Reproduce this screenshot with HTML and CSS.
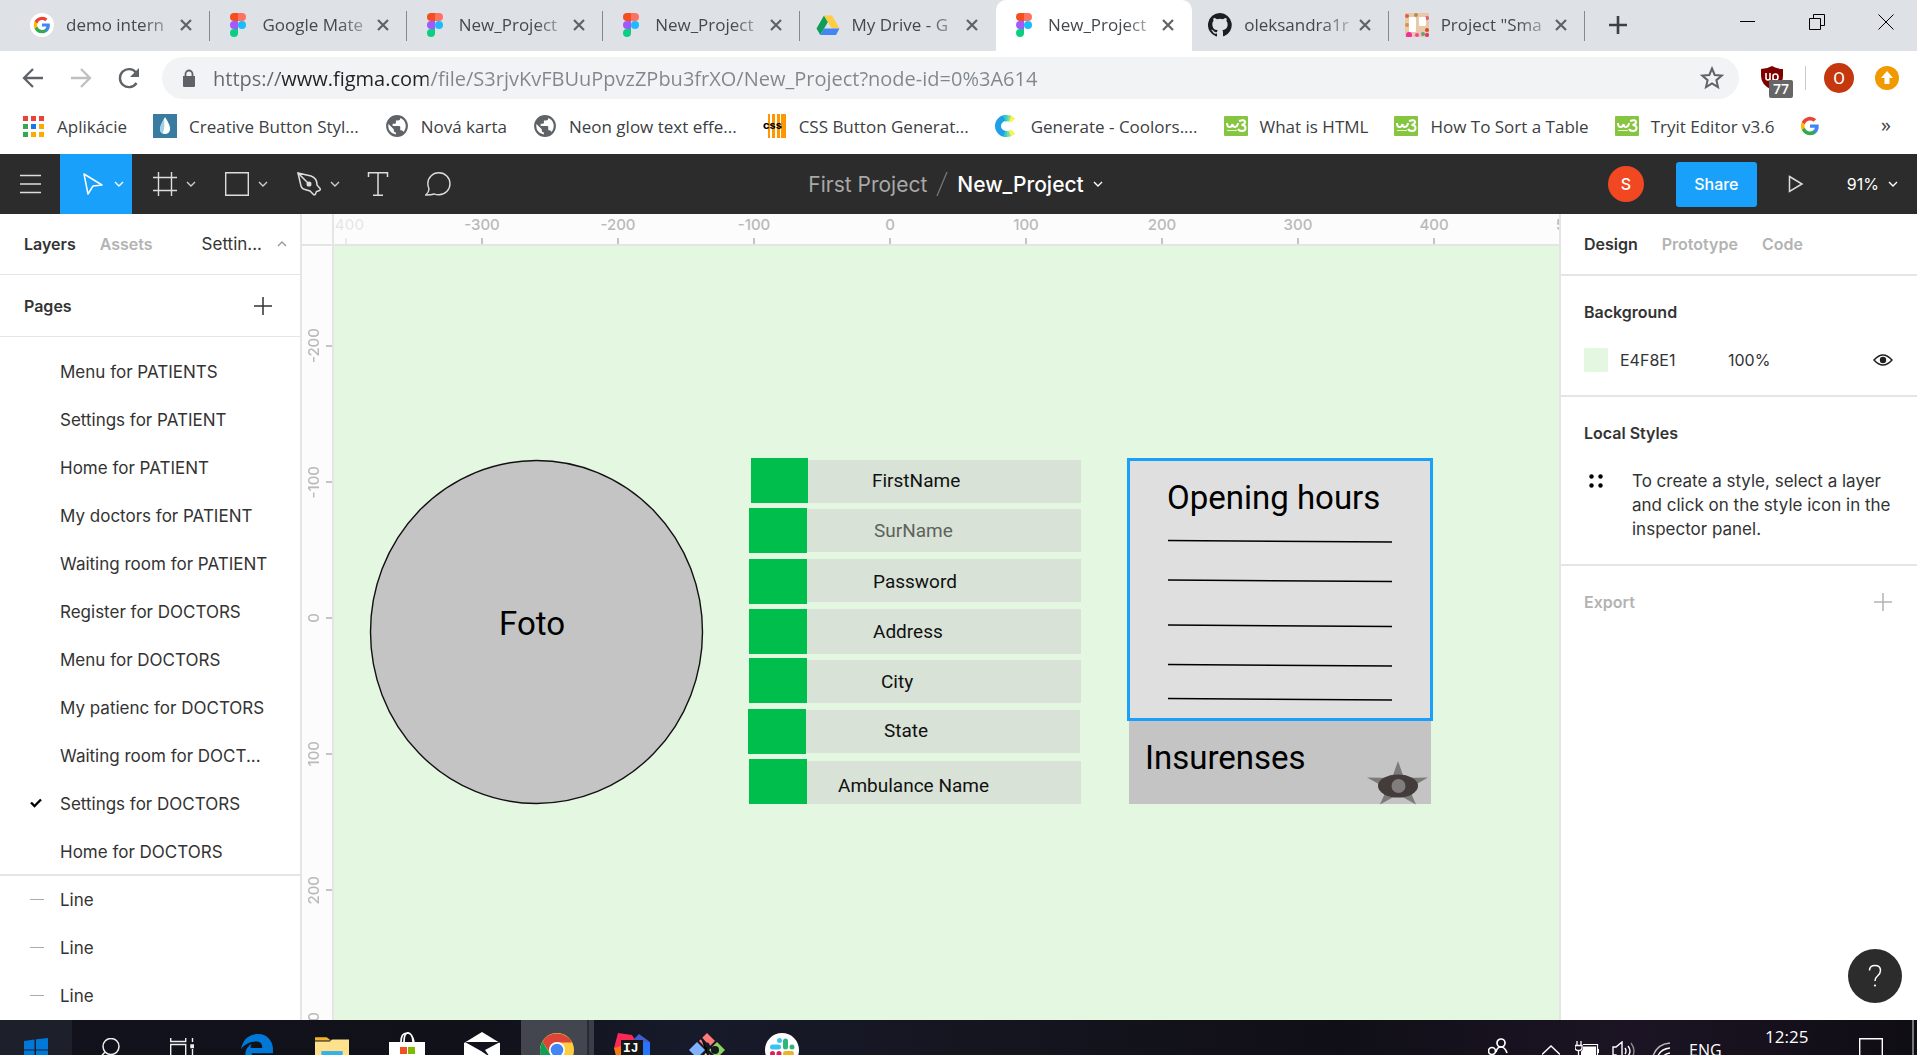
FILE: index.html
```html
<!DOCTYPE html>
<html lang="en">
<head>
<meta charset="utf-8">
<title>New_Project</title>
<link rel="stylesheet" href="styles.css">
</head>
<body>
<svg class="defs" aria-hidden="true">
  <symbol id="figma" viewBox="0 0 16 24"><path fill="#f24e1e" d="M4 0h4v8H4a4 4 0 0 1 0-8z"/><path fill="#ff7262" d="M8 0h4a4 4 0 0 1 0 8H8z"/><path fill="#a259ff" d="M4 8h4v8H4a4 4 0 0 1 0-8z"/><circle cx="12" cy="12" r="4" fill="#1abcfe"/><path fill="#0acf83" d="M4 16h4v4a4 4 0 1 1-4-4z"/></symbol>
  <symbol id="google" viewBox="0 0 24 24"><path fill="#4285f4" d="M22.5 12.2c0-.8-.1-1.400-.2-2.100H12v4h5.900a5 5 0 0 1-2.200 3.400v2.800h3.600c2.100-2 3.200-4.800 3.200-8.100z"/><path fill="#34a853" d="M12 23c3 0 5.500-1 7.300-2.700l-3.600-2.800c-1 .7-2.200 1.100-3.700 1.100-2.900 0-5.300-1.900-6.200-4.500H2.200v2.800A11 11 0 0 0 12 23z"/><path fill="#fbbc05" d="M5.800 14.100a6.600 6.600 0 0 1 0-4.200V7.100H2.200a11 11 0 0 0 0 9.800z"/><path fill="#ea4335" d="M12 5.400c1.600 0 3.100.6 4.200 1.600l3.200-3.200A11 11 0 0 0 2.200 7.100l3.600 2.800C6.700 7.300 9.100 5.400 12 5.400z"/></symbol>
  <symbol id="close" viewBox="0 0 14 14"><path d="M2 2l10 10M12 2L2 12" stroke="#5f6368" stroke-width="2.200" fill="none"/></symbol>
  <symbol id="chev" viewBox="0 0 10 8"><path d="M1 2l4 4 4-4" stroke="currentColor" stroke-width="1.400" fill="none"/></symbol>
  <symbol id="globe" viewBox="1 1 22 22"><path fill="#5f6368" d="M12 2a10 10 0 1 0 0 20 10 10 0 0 0 0-20zm-1 17.900A8 8 0 0 1 4.200 10.200L9 15v1a2 2 0 0 0 2 2v1.900zm6.900-2.500A2 2 0 0 0 16 16h-1v-3a1 1 0 0 0-1-1H8v-2h2a1 1 0 0 0 1-1V7h2a2 2 0 0 0 2-2v-.4a8 8 0 0 1 2.900 12.800z"/></symbol>
  <symbol id="w3" viewBox="0 0 24 20"><rect width="24" height="20" rx="1" fill="#86c540"/><path d="M3 7q0 4 2.500 4T8.500 8q0 3 2.500 3t3-4M15 5q6-2 6 1 0 2.500-3.500 3 4 0 4 3t-3.500 3q-3 0-4-2" stroke="#fff" stroke-width="2" fill="none"/><path d="M3 14.500h10" stroke="#eaf6dc"/></symbol>
  <symbol id="plus" viewBox="0 0 18 18"><path d="M9 0v18M0 9h18" stroke="currentColor" stroke-width="1.500"/></symbol>
</svg>

<header class="browser">
  <div class="tabstrip">
    <div class="tabs">
      <div class="tab"><svg class="fav" viewBox="0 0 24 24"><circle cx="12" cy="12" r="12" fill="#fff"/><use href="#google" x="3" y="3" width="18" height="18"/></svg><span class="tab-title">demo intern</span><button class="x" aria-label="Close tab"><svg><use href="#close"/></svg></button></div>
      <div class="tab"><svg class="fav"><use href="#figma"/></svg><span class="tab-title">Google Mate</span><button class="x" aria-label="Close tab"><svg><use href="#close"/></svg></button></div>
      <div class="tab"><svg class="fav"><use href="#figma"/></svg><span class="tab-title">New_Project</span><button class="x" aria-label="Close tab"><svg><use href="#close"/></svg></button></div>
      <div class="tab"><svg class="fav"><use href="#figma"/></svg><span class="tab-title">New_Project</span><button class="x" aria-label="Close tab"><svg><use href="#close"/></svg></button></div>
      <div class="tab before"><svg class="fav" viewBox="0 0 24 24"><path fill="#0f9d58" d="M8 2.500L.5 15.500 4.300 22l7.600-13z"/><path fill="#ffcd40" d="M8 2.500h8l7.500 13H16z"/><path fill="#4285f4" d="M8 15.500h15.500L20 22H4.300z"/></svg><span class="tab-title">My Drive - G</span><button class="x" aria-label="Close tab"><svg><use href="#close"/></svg></button></div>
      <div class="tab active"><svg class="fav"><use href="#figma"/></svg><span class="tab-title">New_Project</span><button class="x" aria-label="Close tab"><svg><use href="#close"/></svg></button></div>
      <div class="tab"><svg class="fav" viewBox="0 0 16 16"><path fill="#1b1f23" d="M8 0a8 8 0 0 0-2.500 15.600c.4.100.5-.2.500-.4v-1.500c-2 .4-2.500-.5-2.700-1-.1-.2-.5-.9-.8-1.100-.3-.1-.7-.5 0-.5.600 0 1.100.6 1.200.8.700 1.200 1.900.9 2.300.7.100-.5.300-.9.500-1.100-1.800-.2-3.600-.9-3.600-4 0-.9.300-1.600.8-2.100-.1-.2-.4-1 .1-2.100 0 0 .7-.2 2.200.8a7.500 7.500 0 0 1 4 0c1.500-1 2.200-.8 2.200-.8.400 1.100.2 1.900.1 2.100.5.600.8 1.300.8 2.100 0 3.100-1.900 3.700-3.600 3.900.3.300.5.700.5 1.500v2.200c0 .2.200.5.600.4A8 8 0 0 0 8 0z"/></svg><span class="tab-title">oleksandra1r</span><button class="x" aria-label="Close tab"><svg><use href="#close"/></svg></button></div>
      <div class="tab"><svg class="fav" viewBox="0 0 24 24"><rect width="24" height="24" fill="#e8c9a8"/><g><circle cx="2" cy="3" r="2" fill="#e0603a"/><circle cx="22" cy="5" r="2" fill="#e05a7a"/><circle cx="2" cy="12" r="2" fill="#d8924a"/><circle cx="4" cy="22" r="3" fill="#f02f9a"/><circle cx="12" cy="22" r="2" fill="#ff3ca8"/><circle cx="18" cy="21" r="2" fill="#6b9a8a"/><circle cx="22" cy="17" r="2" fill="#cc4f30"/><circle cx="11" cy="2" r="2" fill="#b98a4a"/><circle cx="22" cy="22" r="2" fill="#e03070"/></g><rect x="4" y="4" width="7" height="15" rx="1" fill="#fff"/><rect x="14" y="4" width="7" height="9" rx="1" fill="#fff"/></svg><span class="tab-title">Project "Sma</span><button class="x" aria-label="Close tab"><svg><use href="#close"/></svg></button></div>
    </div>
    <button class="newtab" aria-label="New tab"><svg viewBox="0 0 18 18"><path d="M9 0v18M0 9h18" stroke="#3c4043" stroke-width="2.600"/></svg></button>
    <div class="winctl">
      <button aria-label="Minimize"><svg viewBox="0 0 16 16"><path d="M0 7.500h15" stroke="#000"/></svg></button>
      <button aria-label="Restore"><svg viewBox="0 0 16 16"><path d="M.5 4.500h11v11H.5zM4.500 4V.5h11v11H12" stroke="#000" fill="none"/></svg></button>
      <button aria-label="Close"><svg viewBox="0 0 16 16"><path d="M.5.5l15 15M15.500.5l-15 15" stroke="#000"/></svg></button>
    </div>
  </div>

  <div class="navbar">
    <button class="nav" aria-label="Back"><svg viewBox="0 0 24 24"><path d="M22 12H3M12 3l-9 9 9 9" stroke="#5f6368" stroke-width="2.300" fill="none"/></svg></button>
    <button class="nav" aria-label="Forward"><svg viewBox="0 0 24 24"><path d="M2 12h19M12 3l9 9-9 9" stroke="#bdbfc1" stroke-width="2.300" fill="none"/></svg></button>
    <button class="nav" aria-label="Reload"><svg viewBox="0 0 24 24"><path d="M19.500 17A9 9 0 1 1 19 6.500" stroke="#5f6368" stroke-width="2.400" fill="none"/><path d="M22 2v9h-9z" fill="#5f6368"/></svg></button>
    <label class="omnibox">
      <svg class="lock" viewBox="0 0 14 18"><path fill="#5f6368" d="M1 7h12v10q0 1-1 1H2q-1 0-1-1z"/><path d="M3.500 8V5a3.500 3.500 0 0 1 7 0v3" stroke="#5f6368" stroke-width="1.800" fill="none"/></svg>
      <input type="text" aria-label="Address" value="https://www.figma.com/file/S3rjvKvFBUuPpvzZPbu3frXO/New_Project?node-id=0%3A614">
      <svg class="star" viewBox="0 0 24 24"><path d="M12 2.500l2.700 6.500 7 .6-5.300 4.600 1.600 6.900-6-3.700-6 3.700 1.600-6.900L2.300 9.600l7-.6z" stroke="#5f6368" stroke-width="2" fill="none"/></svg>
    </label>
    <button class="ublock" aria-label="Blocked requests"><svg viewBox="0 0 22 24"><path fill="#800000" d="M11 0q5 3 11 3v7q0 9-11 14Q0 19 0 10V3q6 0 11-3z"/><path d="M5 7v5q0 2 2 2t2-2V7v7M12 18v-8q0-2 2.500-2t2.500 3-2.500 3-2.500-2" stroke="#fff" stroke-width="1.600" fill="none"/></svg><span class="badge">77</span></button>
    <span class="vsep"></span>
    <button class="avatar" aria-label="Profile">O</button>
    <button class="update" aria-label="Update"><svg viewBox="0 0 24 24"><circle cx="12" cy="12" r="12" fill="#f29900"/><path fill="#fff" d="M12 5l6 7h-3.500v6h-5v-6H6z"/></svg></button>
  </div>

  <nav class="bookmarks">
    <a href="#" class="bm"><svg viewBox="0 0 24 24"><path fill="#ea4335" d="M2 2h5v5H2zM10 2h5v5h-5zM18 2h5v5h-5z"/><path fill="#34a853" d="M2 10h5v5H2zM2 18h5v5H2z"/><path fill="#1a73e8" d="M10 10h5v5h-5z"/><path fill="#f9ab00" d="M18 10h5v5h-5zM10 18h5v5h-5zM18 18h5v5h-5z"/></svg>Aplikácie</a>
    <a href="#" class="bm"><svg viewBox="0 0 24 24"><rect width="24" height="24" fill="#3a7ca0"/><path fill="#fff" d="M12 3q6 9 5 13-1 4-5 4-4 0-5-4 0-4 5-13z"/><path fill="#9fd0e6" d="M11 5q1 8-1 14-3-1-3-4 0-4 4-10z"/></svg>Creative Button Styl...</a>
    <a href="#" class="bm"><svg><use href="#globe"/></svg>Nová karta</a>
    <a href="#" class="bm"><svg><use href="#globe"/></svg>Neon glow text effe...</a>
    <a href="#" class="bm"><svg viewBox="0 0 24 24"><path fill="#ff9800" d="M5 0h2v24H5zM9 0h3v24H9zM14 0h3v24h-3zM18 0h5v24h-5z"/><text x="0" y="15" font-size="11" font-weight="700" fill="#000" font-family="Inter">css</text></svg>CSS Button Generat...</a>
    <a href="#" class="bm"><svg viewBox="0 0 24 24" fill="none" stroke-width="6"><path d="M18 6.500A8 8 0 0 0 12 4" stroke="#f7f25a"/><path d="M15 4.600A8 8 0 0 0 9 5" stroke="#7fe08a"/><path d="M11 4a8 8 0 0 0 0 16" stroke="#1f9fe8"/><path d="M12.500 4a9 9 0 0 0-3 .5M9.500 19.500a9 9 0 0 0 3 .5" stroke="#35d0c8"/><path d="M12 20a8 8 0 0 0 3-.6" stroke="#7fe08a"/><path d="M15 19.400a8 8 0 0 0 3-2" stroke="#f7f25a"/></svg>Generate - Coolors....</a>
    <a href="#" class="bm"><svg><use href="#w3"/></svg>What is HTML</a>
    <a href="#" class="bm"><svg><use href="#w3"/></svg>How To Sort a Table</a>
    <a href="#" class="bm"><svg><use href="#w3"/></svg>Tryit Editor v3.6</a>
    <a href="#" class="bm" aria-label="Google"><svg class="small"><use href="#google"/></svg></a>
    <button class="more" aria-label="More bookmarks">»</button>
  </nav>
</header>

<div class="toolbar">
  <div class="tools">
    <button class="tool narrow" aria-label="Menu"><svg class="i24" viewBox="0 0 24 24"><path d="M2 3.500h21M2 12h21M2 20.500h21" stroke="#ddd" stroke-width="1.400"/></svg></button>
    <button class="tool on" aria-label="Move"><svg class="i24" viewBox="0 0 24 24"><path d="M3 2l4 20 5-8 9-1z" stroke="#fff" stroke-width="1.500" fill="none" stroke-linejoin="round"/></svg><svg class="chev"><use href="#chev"/></svg></button>
    <button class="tool" aria-label="Frame"><svg class="i24" viewBox="0 0 24 24"><path d="M5.500 0v24M18.500 0v24M0 5.500h24M0 18.500h24" stroke="#ddd" stroke-width="1.400"/></svg><svg class="chev"><use href="#chev"/></svg></button>
    <button class="tool" aria-label="Rectangle"><svg class="i24" viewBox="0 0 24 24"><path d="M.7.7h22.600v22.600H.7z" stroke="#ddd" stroke-width="1.400" fill="none"/></svg><svg class="chev"><use href="#chev"/></svg></button>
    <button class="tool" aria-label="Pen"><svg class="i24" viewBox="0 0 24 24" fill="none" stroke="#ddd" stroke-width="1.500"><path d="M1 1l3 13q1 3 4 3.500l5 1.500 3.500 3.500q1 1 2-.5l1-2.500 3-1q1.500-1 .5-2l-3-3.500Q20 6 14 4z"/><path d="M1 1l10 10"/><circle cx="12" cy="12" r="1.800" fill="#ddd"/></svg><svg class="chev"><use href="#chev"/></svg></button>
    <button class="tool narrow" aria-label="Text"><svg class="i24" viewBox="0 0 24 24"><path d="M2.500 5V.7h19V5M12 1v22M7 23.300h10" stroke="#ddd" stroke-width="1.500" fill="none"/></svg></button>
    <button class="tool narrow" aria-label="Comment"><svg class="i26" viewBox="0 0 26 24"><path d="M.8 23q3.200-3 3.200-6C2 12 3 7 6 4 9 .8 12 .8 14 .8a11 11 0 0 1 11 11 11 11 0 0 1-11 11q-3 0-4.500-.8Q6 23 .8 23z" stroke="#ddd" stroke-width="1.400" fill="none"/></svg></button>
  </div>
  <div class="crumbs"><a href="#" class="proj">First Project</a><svg class="slash" viewBox="0 0 12 24"><path d="M11 0L1 24" stroke="#777" stroke-width="1.300"/></svg><button class="file">New_Project<svg class="chev"><use href="#chev"/></svg></button></div>
  <div class="actions">
    <span class="user">S</span>
    <button class="share">Share</button>
    <button class="play" aria-label="Present"><svg viewBox="0 0 16 18"><path d="M1.500 1.500l12.500 7.500-12.500 7.500z" stroke="#ddd" stroke-width="1.500" fill="none"/></svg></button>
    <button class="zoom">91%<svg class="chev"><use href="#chev"/></svg></button>
  </div>
</div>

<main class="editor">
  <aside class="left">
    <div class="lefttabs"><button class="tb cur">Layers</button><button class="tb">Assets</button><button class="pagesel">Settin...<svg class="chev up"><use href="#chev"/></svg></button></div>
    <div class="pageshead"><h2>Pages</h2><button class="icon" aria-label="Add page"><svg class="plus"><use href="#plus"/></svg></button></div>
    <ul class="pages">
      <li>Menu for PATIENTS</li>
      <li>Settings for PATIENT</li>
      <li>Home for PATIENT</li>
      <li>My doctors for PATIENT</li>
      <li>Waiting room for PATIENT</li>
      <li>Register for DOCTORS</li>
      <li>Menu for DOCTORS</li>
      <li>My patienc for DOCTORS</li>
      <li>Waiting room for DOCT...</li>
      <li class="sel"><svg class="mark" viewBox="0 0 12 10"><path d="M1 4.500l3.500 3.500L11 1.500" stroke="#000" stroke-width="2.400" fill="none"/></svg>Settings for DOCTORS</li>
      <li>Home for DOCTORS</li>
    </ul>
    <ul class="layers">
      <li><i class="dash"></i>Line</li>
      <li><i class="dash"></i>Line</li>
      <li><i class="dash"></i>Line</li>
    </ul>
  </aside>

  <section class="stage">
    <div class="corner"></div>
    <div class="hruler"><span class="fade">-400</span><span>-300</span><span>-200</span><span>-100</span><span>0</span><span>100</span><span>200</span><span>300</span><span>400</span><span>500</span></div>
    <div class="vruler"><span><b>-200</b></span><span><b>-100</b></span><span><b>0</b></span><span><b>100</b></span><span><b>200</b></span><span><b>300</b></span></div>
    <div class="canvas">
      <svg class="art">
        <ellipse cx="202.500" cy="386" rx="166" ry="171.500" fill="#c4c4c4" stroke="#111" stroke-width="1.400"/>
        <g fill="#d8e2d6">
          <rect x="474" y="214" width="273" height="43"/><rect x="473" y="263" width="274" height="43"/><rect x="473" y="313" width="274" height="43"/><rect x="473" y="363" width="274" height="45"/><rect x="473" y="414" width="274" height="43"/><rect x="472" y="464" width="274" height="43"/><rect x="473" y="515" width="274" height="43"/>
        </g>
        <g fill="#00be4b">
          <rect x="417" y="212" width="57" height="45"/><rect x="415" y="262" width="58" height="45"/><rect x="415" y="313" width="58" height="45"/><rect x="415" y="363" width="58" height="45"/><rect x="415" y="412" width="58" height="45"/><rect x="414" y="463" width="58" height="45"/><rect x="415" y="513" width="58" height="45"/>
        </g>
        <rect x="795" y="474" width="302" height="84" fill="#c4c4c4"/>
        <rect x="794.500" y="213.500" width="303" height="260" fill="#dfdfdf" stroke="#18a0fb" stroke-width="3"/>
        <path d="M834 294.500l224 1.500M834 334l224 1.500M834 379l224 1.500M834 418.500l224 1.500M834 452.500l224 1.500" stroke="#000" stroke-width="1.400"/>
        <path fill="#7d7a7a" d="M1064 515l6 17 24-.5-19 11 7 16-18-10-18 10 7-16-20-11 25 .5z"/>
        <ellipse cx="1064" cy="540" rx="20" ry="11.500" fill="#443b3b"/><circle cx="1064.500" cy="540" r="7" fill="#807d7d"/>
        <g class="big"><text x="165" y="389">Foto</text><text x="833" y="263">Opening hours</text><text x="811" y="523">Insurenses</text></g>
        <g class="fields"><text x="538" y="241">FirstName</text><text class="dim" x="540" y="291">SurName</text><text x="539" y="342">Password</text><text x="539" y="392">Address</text><text x="547" y="442">City</text><text x="550" y="491">State</text><text x="504" y="546">Ambulance Name</text></g>
      </svg>
    </div>
  </section>

  <aside class="right">
    <div class="righttabs"><button class="tb cur">Design</button><button class="tb">Prototype</button><button class="tb">Code</button></div>
    <section class="group">
      <h2>Background</h2>
      <div class="fill"><span class="swatch"></span><input class="hex" aria-label="Background colour" value="E4F8E1"><input class="pct" aria-label="Opacity" value="100%"><button class="icon" aria-label="Toggle visibility"><svg class="eye" viewBox="0 0 20 12"><path d="M1 6q9-10 18 0-9 10-18 0z" stroke="#222" stroke-width="1.500" fill="none"/><circle cx="10" cy="6" r="3.200" fill="#222"/></svg></button></div>
    </section>
    <section class="group">
      <h2>Local Styles</h2>
      <div class="hint"><svg class="dots" viewBox="0 0 14 14"><circle cx="2.500" cy="2.500" r="2.200"/><circle cx="11.500" cy="2.500" r="2.200"/><circle cx="2.500" cy="11.500" r="2.200"/><circle cx="11.500" cy="11.500" r="2.200"/></svg><p>To create a style, select a layer<br>and click on the style icon in the<br>inspector panel.</p></div>
    </section>
    <section class="export"><h2>Export</h2><button class="icon" aria-label="Add export"><svg class="plus"><use href="#plus"/></svg></button></section>
    <button class="help" aria-label="Help"><svg viewBox="0 0 14 24"><path d="M1.500 6.500q0-5 5.500-5t5.500 5q0 3-3 5.500Q7 14 7 17" stroke="#fff" stroke-width="1.500" fill="none"/><circle cx="7" cy="21.500" r="1.100" fill="#fff"/></svg></button>
  </aside>
</main>

<footer class="taskbar">
  <button class="tk start" aria-label="Start"><svg viewBox="0 0 24 24"><path fill="#0078d7" d="M0 3l10.500-1.500v10H0zM12 1.300L24 0v11.500H12zM0 12.500h10.500v10L0 21zM12 12.500h12V24l-12-1.500z"/></svg></button>
  <button class="tk search" aria-label="Search"><svg viewBox="0 0 24 24" fill="none" stroke="#eee" stroke-width="1.500"><circle cx="15" cy="8.500" r="8"/><path d="M9 14l-8 9"/></svg></button>
  <button class="tk" aria-label="Task view"><svg viewBox="0 0 24 24" fill="none" stroke="#eee" stroke-width="1.400"><path d="M.7 0v3.500h15V0M.7 20V6.500h15V20M22.500 0v4M22.500 11v12"/><path fill="#eee" d="M21 7h2.500v2.500H21z"/></svg></button>
  <button class="tk" aria-label="Edge"><svg class="lg" viewBox="0 0 32 32"><path fill="#0078d7" d="M1 15C3 5 9 1 17 1c9 0 14 7 14 14v4H11c0 5 9 8 17 3v6C16 35 5 30 5 20c0-5 3-8 6-10-1 2-1 3-1 4h11c0-5-3-6-6-6-6 0-11 3-14 7z"/></svg></button>
  <button class="tk" aria-label="Explorer"><svg class="lg" viewBox="0 0 32 32"><path fill="#f0b429" d="M0 4h11l4 3H0z"/><path fill="#ffe08c" d="M0 8h14l2-2h16v24H0z"/><path fill="#36b0e8" d="M6 17h20v12H6z"/></svg></button>
  <button class="tk" aria-label="Store"><svg class="xl" viewBox="0 0 36 36"><path d="M12 10q0-9 6-9t6 9M15 10q0-9 4-9t6 9" stroke="#fff" stroke-width="1.700" fill="none"/><path fill="#fff" d="M0 10h36v26H0z"/><path fill="#f25022" d="M11 15h7v7h-7z"/><path fill="#7fba00" d="M19 15h7v7h-7z"/><path fill="#00a4ef" d="M11 23h7v7h-7z"/><path fill="#ffb900" d="M19 23h7v7h-7z"/></svg></button>
  <button class="tk" aria-label="Mail"><svg class="xl" viewBox="0 0 36 36"><path fill="#fff" d="M0 11L18 0l18 11v22H0z"/><path fill="#11121d" d="M1 10h35l-15 8 5 7-9-6z"/></svg></button>
  <button class="tk running" aria-label="Chrome"><svg class="lg" viewBox="0 0 34 34"><circle cx="17" cy="17" r="17" fill="#ffcd42"/><path fill="#db4437" d="M2.500 8.500A17 17 0 0 1 32 9.500H17L10 20z"/><path fill="#0f9d58" d="M2.500 8.500L10 21l8 4-4 9A17 17 0 0 1 2.500 8.500z"/><circle cx="17" cy="17" r="8" fill="#fff"/><circle cx="17" cy="17" r="6.300" fill="#4285f4"/></svg></button>
  <button class="tk" aria-label="IntelliJ"><svg class="xl" viewBox="0 0 36 36"><path fill="#fe2857" d="M4 1l14 2 5 8-6 12L0 16z"/><path fill="#f97a12" d="M0 16l7-2v16l-5-6z"/><path fill="#3f5fd0" d="M19 8l6-6 11 8v12l-8 12-9-4z"/><path fill="#2874ff" d="M29 10l7 1v12l-7 9z"/><path fill="#171717" d="M7 8h22v22H7z"/><text x="9" y="20" font-size="13" font-weight="700" fill="#fff" font-family="Liberation Mono">IJ</text></svg></button>
  <button class="tk" aria-label="Git"><svg class="xl" viewBox="0 0 36 36"><path fill="#ff7b7b" d="M18 1l8 8-8 8-8-8z"/><path fill="#80b3ff" d="M8 10l8 8-8 8-8-8z"/><path fill="#8cd35f" d="M28 10l8 8-8 8-8-8z"/><path fill="#ffe680" d="M18 20l8 8-8 8-8-8z"/><path d="M12 6l7 8v12M18 13l10 6" stroke="#171722" stroke-width="2.200"/><circle cx="26" cy="18" r="4" fill="#171722"/><circle cx="18" cy="13" r="2.500" fill="#171722"/></svg></button>
  <button class="tk" aria-label="Slack"><svg class="lg" viewBox="0 0 34 34"><circle cx="17" cy="17" r="17" fill="#fff"/><g stroke-linecap="round" stroke-width="5"><path stroke="#36c5f0" d="M7.500 14h6M14.500 7.500v.1"/><path stroke="#2eb67d" d="M20.500 8v6M27 14v.1"/><path stroke="#ecb22e" d="M20.500 20.500h6M20.500 27v.1"/><path stroke="#e01e5a" d="M14 20.500v6M7.500 20.500v.1"/></g></svg></button>
  <div class="tray">
    <svg class="people" viewBox="0 0 20 20" fill="none" stroke="#fff" stroke-width="1.700"><circle cx="13" cy="5" r="4"/><circle cx="4" cy="13" r="3.500"/><path d="M8 14q1-5 5-5t6 6M0 20q1-3 4-3t4 3"/></svg>
    <svg class="up2" viewBox="0 0 18 10"><path d="M0 9.500L9 1l9 8.500" stroke="#fff" stroke-width="1.400" fill="none"/></svg>
    <svg class="power" viewBox="0 0 24 20"><path d="M2 0v4M6 0v4M0 4.500h7v2q0 3-3.500 3T0 6.500zM3.500 10v6" stroke="#fff" stroke-width="1.300" fill="none"/><path d="M8 3.500h14.500v12.500H5" stroke="#fff" stroke-width="1.200" fill="none"/><path fill="#fff" d="M8 5.500h13v9H6v-4q2-1 2-5zM22 8h2v4h-2z"/></svg>
    <svg class="sound" viewBox="0 0 24 20" fill="none" stroke="#fff" stroke-width="1.400"><path d="M1 6h3l6-5v18l-6-5H1zM13 7q2 3 0 6M16 5q4 5 0 10"/><path stroke="#888" d="M19 2q6 8 0 16"/></svg>
    <svg class="wifi" viewBox="0 0 18 20" fill="none" stroke="#fff" stroke-width="1.400"><path stroke="#bbb" d="M1 14Q5 2 18 1"/><path d="M5 16q3-9 13-10M9 18q2-6 9-7"/></svg>
    <span class="lang">ENG</span>
    <time class="clock">12:25</time>
    <svg class="note" viewBox="0 0 24 24"><path d="M.7.7h22.600V18H.7z" stroke="#fff" stroke-width="1.400" fill="none"/></svg>
    <span class="peek"></span>
  </div>
</footer>
</body>
</html>
```
FILE: styles.css
```css
* { box-sizing: border-box; }
html, body { height: 100%; }
body { margin: 0; display: flex; flex-direction: column; overflow: hidden; background: #fff; color: #333; font-family: Inter, "Liberation Sans", sans-serif; font-size: 16px; }
button, input { font: inherit; color: inherit; border: 0; background: none; padding: 0; margin: 0; }
a { color: inherit; text-decoration: none; }
h2, p, ul { margin: 0; padding: 0; font-size: inherit; }
ul { list-style: none; }
svg { display: block; flex: none; }
.defs { display: none; }
.chev { width: 10px; height: 8px; }

/* browser chrome */
.browser { flex: none; font-family: "Open Sans", "Noto Sans", sans-serif; font-size: 17px; }
.tabstrip { display: flex; height: 51px; background: #dee1e6; padding-left: 14px; }
.tabs { display: flex; flex: 0 1 1571px; min-width: 0; }
.tab { flex: 1; min-width: 0; display: flex; align-items: center; padding: 0 17px 2px 16px; position: relative; color: #45494d; }
.tab::after { content: ""; position: absolute; right: 0; top: 11px; width: 1px; height: 30px; background: #85888c; }
.tab.active::after, .tab.before::after { content: none; }
.tab.active { background: #fff; border-radius: 10px 10px 0 0; }
.fav { width: 24px; height: 24px; }
.tab-title { flex: 1; margin-left: 12px; white-space: nowrap; mask-image: linear-gradient(to right, #000 70%, rgb(0 0 0 / 20%)); }
.x { padding: 4px 0 4px 4px; }
.x svg { width: 14px; height: 14px; }
.newtab { padding: 0 24px 2px; }
.newtab svg { width: 18px; height: 18px; }
.winctl { display: flex; margin-left: auto; padding-right: 23px; gap: 53px; align-items: center; padding-bottom: 8px; }
.winctl svg { width: 16px; height: 16px; }

.navbar { display: flex; align-items: center; height: 54px; padding: 0 18px 0 21px; }
.nav { width: 48px; }
.nav svg { width: 24px; height: 24px; }
.omnibox { flex: 1; height: 42px; margin-left: -3px; display: flex; align-items: center; background: #f1f3f4; border-radius: 21px; padding: 0 15px 0 20px; }
.lock { width: 14px; height: 18px; }
.omnibox input { flex: 1; min-width: 0; height: 42px; margin-left: 17px; outline: 0; font-size: 20px; color: transparent; background: linear-gradient(to right, #64686c 67px, #202124 67px, #202124 215px, #80868b 215px); background-clip: text; -webkit-background-clip: text; }
.star { width: 24px; height: 24px; }
.ublock { position: relative; margin-left: 22px; }
.ublock svg { width: 22px; height: 24px; }
.badge { position: absolute; left: 8px; top: 14px; width: 24px; height: 18px; border-radius: 2px; background: #666; color: #fff; font-size: 14px; line-height: 18px; font-weight: 600; }
.vsep { width: 1px; height: 24px; background: #c8cacd; margin: 0 18px 0 22px; }
.avatar { width: 30px; height: 30px; border-radius: 50%; background: #c5370d; color: #fff; font-family: Roboto, sans-serif; }
.update { margin-left: 21px; }
.update svg { width: 24px; height: 24px; }

.bookmarks { display: flex; align-items: center; height: 49px; padding: 0 26px 7px 21px; gap: 26px; white-space: nowrap; }
.bm { display: flex; align-items: center; gap: 12px; color: #3c4043; }
.bm svg { width: 24px; height: 24px; }
.bm svg.small { width: 20px; height: 20px; }
.more { margin-left: auto; font-size: 20px; line-height: 24px; padding-bottom: 3px; color: #3c4043; }

/* editor toolbar */
.toolbar { flex: none; height: 60px; background: #2c2c2c; color: #fff; display: grid; grid-template-columns: 1fr auto 1fr; align-items: center; }
.tools { display: flex; height: 60px; }
.tool { width: 72px; display: flex; align-items: center; justify-content: flex-end; gap: 9px; padding-right: 8px; color: #ccc; }
.tool.narrow { width: 60px; justify-content: center; padding: 0; }
.tool.on { background: #18a0fb; color: #fff; }
.i24 { width: 24px; height: 24px; }
.i26 { width: 26px; height: 24px; }
.crumbs { display: flex; align-items: center; font-size: 21px; padding-right: 6px; }
.proj { color: #a8a8a8; }
.slash { width: 12px; height: 24px; margin: 0 9px; }
.file { display: flex; align-items: center; gap: 9px; font-weight: 500; }
.actions { display: flex; align-items: center; justify-content: flex-end; padding-right: 19px; }
.user { width: 36px; height: 36px; border-radius: 50%; background: #f24822; text-align: center; line-height: 36px; font-weight: 500; }
.share { width: 81px; height: 45px; margin-left: 32px; border-radius: 3px; background: #18a0fb; font-weight: 500; }
.play { margin: 0 43px 0 31px; }
.play svg { width: 16px; height: 18px; }
.zoom { display: flex; align-items: center; gap: 9px; }

/* editor body */
.editor { flex: 1; min-height: 0; display: flex; }
.left { width: 302px; flex: none; border-right: 2px solid #e5e5e5; overflow: hidden; }
.lefttabs { height: 61px; border-bottom: 1px solid #e5e5e5; display: flex; align-items: center; padding: 0 13px 0 24px; }
.tb { font-weight: 600; color: #b3b3b3; margin-right: 24px; }
.tb.cur { color: #333; }
.pagesel { display: flex; align-items: center; margin-left: auto; gap: 15px; font-size: 17px; }
.up { transform: rotate(180deg); color: #999; }
h2 { font-weight: 600; }
.pageshead { height: 62px; border-bottom: 1px solid #e5e5e5; display: flex; align-items: center; justify-content: space-between; padding: 0 28px 0 24px; }
.plus { width: 18px; height: 18px; }
.pages { padding-top: 11px; border-bottom: 2px solid #e5e5e5; }
.pages li, .layers li { height: 48px; line-height: 48px; padding-left: 60px; position: relative; white-space: nowrap; font-size: 17px; }
.pages li:last-child { height: 46px; }
.mark { position: absolute; left: 30px; top: 18px; width: 12px; height: 10px; }
.dash { position: absolute; left: 30px; top: 23px; width: 14px; height: 1px; background: #aaa; }

.stage { flex: 1; min-width: 0; display: grid; grid-template: 32px minmax(0, 1fr) / 32px minmax(0, 1fr); overflow: hidden; color: #b9b9b9; font-size: 15px; font-weight: 500; background: #fcfcfc; }
.corner { border-right: 2px solid #e5e5e5; border-bottom: 2px solid #e5e5e5; }
.hruler { display: flex; overflow: hidden; border-bottom: 2px solid #e5e5e5; }
.hruler span { flex: none; width: 136px; text-align: center; line-height: 22px; background: linear-gradient(#c4c4c4, #c4c4c4) center bottom / 2px 6px no-repeat; }
.hruler span:first-child { margin-left: -56px; }
.fade { opacity: .3; }
.vruler { overflow: hidden; padding-top: 32px; border-right: 2px solid #e5e5e5; }
.vruler span { height: 136px; display: flex; align-items: center; padding-left: 2px; background: linear-gradient(#c4c4c4, #c4c4c4) right center / 6px 2px no-repeat; }
.vruler b { writing-mode: vertical-rl; transform: rotate(180deg); font-weight: 500; line-height: 20px; }
.canvas { background: #e4f7e1; overflow: hidden; }
.art { width: 100%; height: 100%; font-family: Roboto, sans-serif; font-weight: 400; }
.big { font-size: 33px; fill: #000; }
.fields { font-size: 19px; fill: #111; }
.dim { fill: #5e625d; }

.right { width: 358px; flex: none; border-left: 2px solid #e5e5e5; position: relative; }
.righttabs { height: 62px; border-bottom: 2px solid #e5e5e5; display: flex; align-items: center; padding-left: 23px; }
.group { border-bottom: 2px solid #e5e5e5; padding: 24px 24px 23px 23px; line-height: 24px; }
.fill { display: flex; align-items: center; margin-top: 24px; }
.swatch { width: 24px; height: 24px; background: #e4f7e1; border-radius: 1px; }
.hex { width: 84px; margin: 0 12px; }
.hex + .pct { margin-left: 12px; width: 80px; }
.icon { margin-left: auto; }
.eye { width: 20px; height: 12px; }
.hint { display: flex; margin-top: 24px; font-size: 17px; white-space: nowrap; }
.dots { width: 14px; height: 14px; margin: 5px 29px 0 5px; }
.export { display: flex; align-items: center; height: 72px; padding: 0 25px 0 23px; color: #b3b3b3; }
.help { position: absolute; right: 15px; bottom: 17px; width: 54px; height: 54px; border-radius: 50%; background: #2c2c2c; display: flex; align-items: center; justify-content: center; }
.help svg { width: 14px; height: 24px; }

/* taskbar runs past the bottom edge of the window */
.taskbar { flex: none; height: 60px; margin-bottom: -25px; background: linear-gradient(to right, #12121c, #101119 25%, #171a2a 36%, #15151f 52%, #100f17 70%, #1c1424 85%, #0f0d14); display: flex; color: #fff; font-family: "Open Sans", "Noto Sans", sans-serif; }
.tk { width: 75px; display: flex; align-items: center; justify-content: center; }
.tk svg { width: 24px; height: 24px; }
.tk svg.lg { width: 34px; height: 34px; }
.tk svg.xl { width: 36px; height: 36px; }
.tk.start, .tk.search { width: 72px; }
.start { background: #1d1f2b; }
.running { background: linear-gradient(to right, transparent 2px, #43454f 2px, #43454f 68px, #282b36 68px, #282b36 70px, #3b3d48 70px); }
.tray { margin-left: auto; display: flex; align-items: flex-start; padding-right: 3px; }
.people { width: 20px; height: 20px; margin: 18px 34px 0 0; }
.up2 { width: 18px; height: 10px; margin: 25px 15px 0 0; }
.power { width: 24px; height: 20px; margin: 21px 13px 0 0; }
.sound { width: 24px; height: 20px; margin: 21px 16px 0 0; }
.wifi { width: 18px; height: 20px; margin: 22px 19px 0 0; }
.lang { width: 76px; line-height: 20px; margin-top: 20px; }
.clock { width: 94px; font-size: 17px; line-height: 20px; margin-top: 7px; }
.note { width: 24px; height: 24px; margin-top: 18px; }
.peek { width: 2px; height: 60px; margin-left: 29px; background: #77757a; }
```
